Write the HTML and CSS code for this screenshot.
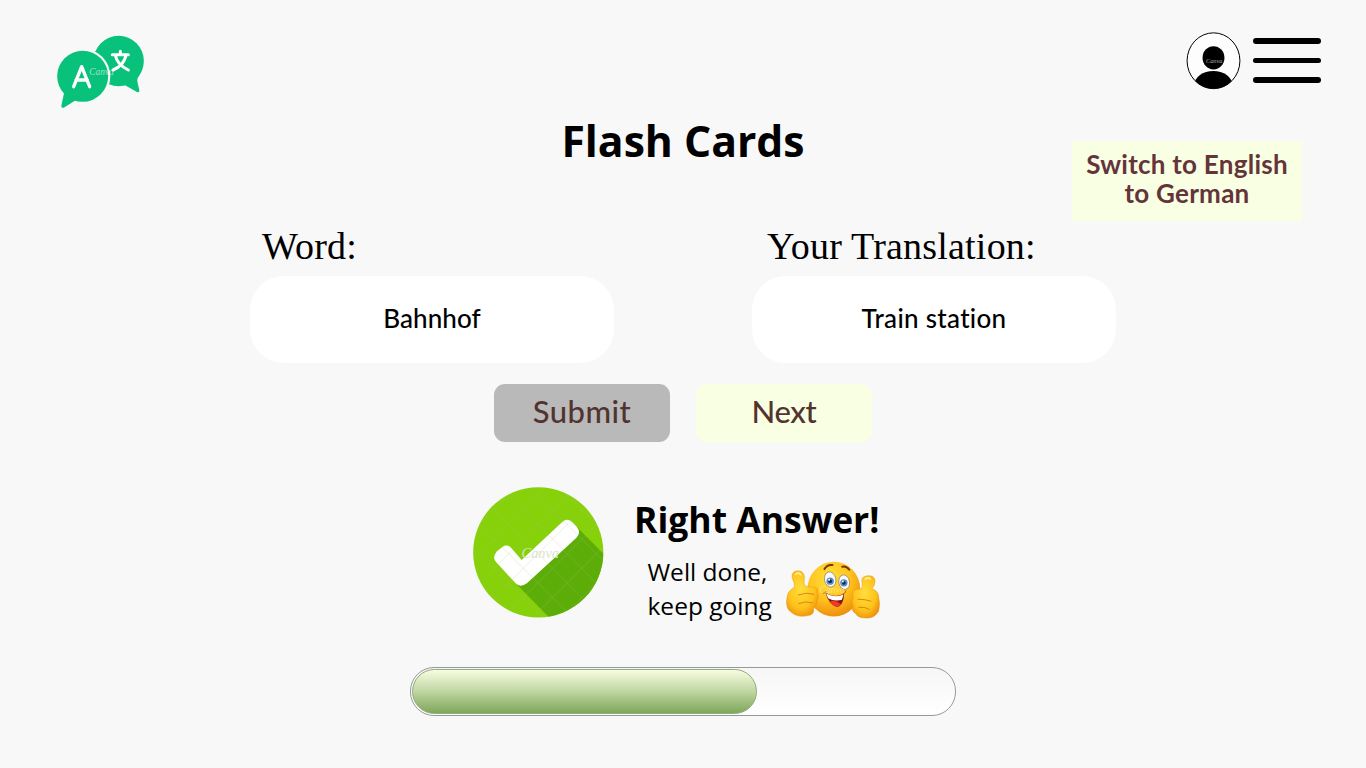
FILE: index.html
```html
<!DOCTYPE html>
<html lang="en">
<head>
<meta charset="utf-8">
<title>Flash Cards</title>
<link rel="stylesheet" href="styles.css">
</head>
<body>
<header class="header">
  <svg class="logo" viewBox="36 30 261 222" role="img" aria-label="Translate">
    <circle class="logo-green" cx="221" cy="108" r="75.500"/>
    <path class="logo-green" d="M284 149q-10 12-6 25l5 21q1 9-7 6l-36-20z"/>
    <circle class="logo-gap" cx="113" cy="154" r="83"/>
    <circle class="logo-green" cx="113" cy="154" r="76.500"/>
    <path class="logo-green" d="M57 205l-8 37q-1 8 7 6l36-22z"/>
    <path class="logo-stroke" d="M86 185l24-60 24 60M93 165h34"/>
    <path class="logo-stroke logo-thin" d="M202 89h48M226 79v10M211 91q5 28 39 44M243 91q-7 31-39 44"/>
    <text class="mark mark-logo" x="133" y="149">Canva</text>
  </svg>
  <div class="header-actions">
    <svg class="avatar" viewBox="34 35 165 173" role="img" aria-label="Profile">
      <defs><clipPath id="avatar-clip"><ellipse cx="116.500" cy="121.500" rx="80" ry="84.500"/></clipPath></defs>
      <ellipse cx="116.500" cy="121.500" rx="79.500" ry="84" fill="#fdfdfd" stroke="#000" stroke-width="3"/>
      <g clip-path="url(#avatar-clip)"><ellipse cx="116" cy="194" rx="57" ry="42"/></g>
      <ellipse cx="116.500" cy="112.500" rx="33" ry="35"/>
      <text class="mark mark-avatar" x="94" y="129">Canva</text>
    </svg>
    <div class="menu"><span></span><span></span><span></span></div>
  </div>
</header>
<main>
  <section class="title-row">
    <h1 class="title">Flash Cards</h1>
    <button class="switch">Switch to English<br>to German</button>
  </section>
  <section class="fields">
    <div class="field">
      <h2 class="label label-word">Word:</h2>
      <div class="box">Bahnhof</div>
    </div>
    <div class="field">
      <h2 class="label label-translation">Your Translation:</h2>
      <div class="box box-translation">Train station</div>
    </div>
  </section>
  <section class="buttons">
    <button class="btn btn-submit">Submit</button>
    <button class="btn btn-next">Next</button>
  </section>
  <section class="feedback">
    <svg class="check" viewBox="24 21 392 393" role="img" aria-label="Correct">
      <defs>
        <clipPath id="check-clip"><circle cx="220" cy="217" r="195.500"/></clipPath>
        <pattern id="check-grid" width="62" height="62" patternUnits="userSpaceOnUse" patternTransform="rotate(45)"><path d="M0 0H62M0 0V62" stroke="#a5bd85" stroke-opacity=".5" stroke-width="2" fill="none"/></pattern>
      </defs>
      <g clip-path="url(#check-clip)">
        <rect x="20" y="20" width="400" height="400" fill="#87d10b"/>
        <path d="M336 141L436 241V420H260L152 310z" fill="#5cad08"/>
      </g>
      <path d="M96 214Q80 234 94 247L152 310Q166 325 186 310L334 174Q350 158 336 141L324 128Q308 112 292 126L170 240L141 206Q128 190 112 201z" fill="#fff"/>
      <circle cx="220" cy="217" r="195" fill="url(#check-grid)"/>
      <text class="mark mark-check" x="170" y="233">Canva</text>
    </svg>
    <div class="message">
      <h2 class="result">Right Answer!</h2>
      <div class="praise">
        <p class="praise-text">Well done,<br>keep going</p>
        <svg class="emoji" viewBox="19 27 281 173" role="img" aria-label="Thumbs up">
          <defs>
            <radialGradient id="face" cx=".42" cy=".3" r=".72"><stop offset="0" stop-color="#ffe23c"/><stop offset=".55" stop-color="#ffc31f"/><stop offset="1" stop-color="#ee8d0c"/></radialGradient>
            <radialGradient id="hand" cx=".45" cy=".4" r=".65"><stop offset="0" stop-color="#ffde3c"/><stop offset=".65" stop-color="#ffc21b"/><stop offset="1" stop-color="#ed900c"/></radialGradient>
          </defs>
          <ellipse cx="162" cy="111" rx="79" ry="82" fill="url(#face)"/>
          <path d="M134 51q8-15 24-12M187 44q12-4 21 9" fill="none" stroke="#7b360b" stroke-width="6" stroke-linecap="round"/>
          <ellipse cx="151" cy="82" rx="17" ry="23" fill="#f5faff" stroke="#9d7547" stroke-width="2" transform="rotate(-12 151 82)"/>
          <ellipse cx="193" cy="90" rx="16" ry="22" fill="#f5faff" stroke="#9d7547" stroke-width="2" transform="rotate(-12 193 90)"/>
          <circle cx="151" cy="87" r="11" fill="#588bc7"/><circle cx="192" cy="92" r="11" fill="#588bc7"/>
          <circle cx="151" cy="87" r="5.500" fill="#132846"/><circle cx="192" cy="92" r="5.500" fill="#132846"/>
          <circle cx="148" cy="83" r="3" fill="#fff"/><circle cx="189" cy="88" r="3" fill="#fff"/>
          <path d="M137 122q28 17 56 3q-2 37-22 39q-24-6-34-42z" fill="#8c160d"/>
          <path d="M149 149q15-9 34 7q-6 8-13 8-13-5-21-15z" fill="#ef382c"/>
          <path d="M139 124q27 14 52 3l-5 16q-23 6-41-5z" fill="#fff"/>
          <path d="M130 123q5-1 9-5M190 125q8-5 8-9" fill="none" stroke="#b76811" stroke-width="3" stroke-linecap="round"/>
          <g fill="url(#hand)" stroke="#e8960f" stroke-width="1.500">
            <path d="M44 105Q46 95 40 84Q31 63 48 57Q71 52 74 74Q73 89 73 97Q79 105 102 105Q117 107 113 120Q120 133 112 146Q112 160 102 168Q104 187 85 190Q55 197 36 181Q16 169 22 137Q24 115 44 105z"/>
            <path d="M245 110Q249 99 246 88Q243 73 263 71Q285 69 285 88Q285 100 276 110Q296 116 296 137Q301 154 296 176Q287 194 267 197Q235 200 227 184Q213 176 219 160Q213 146 220 136Q214 113 232 111z"/>
          </g>
          <path d="M56 128q25-9 46-2M57 154q22-9 41-2M234 141q22 0 39 6M236 165q20-2 32 6" fill="none" stroke="#ca7c0c" stroke-width="2.500" stroke-linecap="round"/>
          <path d="M49 67q6-9 14 1M256 81q8-7 15 0" fill="none" stroke="#fff0a0" stroke-width="5" stroke-linecap="round"/>
          <text class="mark mark-emoji" x="119" y="121">Canva</text>
        </svg>
      </div>
    </div>
  </section>
  <div class="progress"><div class="progress-fill"></div></div>
</main>
</body>
</html>
```
FILE: styles.css
```css
* { box-sizing: border-box; }
body {
  margin: 0;
  width: 1366px;
  height: 768px;
  overflow: hidden;
  background: #f8f8f8;
  color: #000;
  font-family: "Open Sans", sans-serif;
  font-variant-ligatures: none;
}
h1, h2, p { margin: 0; }
button { border: 0; padding: 0; }
.header {
  height: 118px;
  padding: 32px 45px 0 57px;
  display: flex;
  justify-content: space-between;
  align-items: flex-start;
}
.logo { width: 87px; height: 74px; margin-top: 3px; }
.logo-green { fill: #08c17b; }
.logo-gap { fill: #f8f8f8; }
.logo-stroke { fill: none; stroke: #fff; stroke-width: 10; stroke-linecap: round; stroke-linejoin: round; }
.logo-thin { stroke-width: 9; }
.mark { font-family: "Liberation Serif", serif; font-style: italic; }
.mark-logo { font-size: 28px; fill: #fff; fill-opacity: .6; }
.mark-avatar { font-size: 19px; fill: #aaa; }
.mark-check { font-size: 43px; fill: #d9e4ce; }
.mark-emoji { font-size: 29px; fill: #fff; fill-opacity: .4; }
.header-actions { display: flex; gap: 12px; }
.avatar { width: 55px; height: 57.500px; }
.menu {
  width: 68px;
  height: 45px;
  margin-top: 6px;
  display: flex;
  flex-direction: column;
  justify-content: space-between;
}
.menu span { height: 5.600px; border-radius: 3px; background: #000; }
.title-row {
  height: 103px;
  display: grid;
  grid-template-columns: 1fr auto 1fr;
  align-items: start;
}
.title { grid-column: 2; font-size: 42.700px; line-height: 46px; font-weight: 700; white-space: nowrap; }
.switch {
  justify-self: end;
  width: 230px;
  height: 80px;
  margin: 23px 64px 0 0;
  padding-bottom: 4px;
  background: #f9ffe2;
  color: #65343b;
  font: 700 26px/29px Lato, sans-serif;
  font-variant-ligatures: none;
  letter-spacing: .25px;
  white-space: nowrap;
}
.fields { display: flex; gap: 138px; padding-left: 250px; }
.field { width: 364px; }
.label {
  height: 55px;
  padding-left: 12px;
  font: 400 38px/50px "Liberation Serif", serif;
  letter-spacing: .2px;
  white-space: nowrap;
}
.label-translation { padding-left: 15px; }
.box {
  height: 87px;
  border-radius: 34px;
  background: #fff;
  display: flex;
  align-items: center;
  justify-content: center;
  padding-bottom: 4px;
  font: 500 26px/30px Lato, sans-serif;
  font-variant-ligatures: none;
  letter-spacing: .1px;
}
.box-translation { letter-spacing: .3px; }
.buttons { display: flex; justify-content: center; gap: 26px; margin-top: 21px; }
.btn {
  width: 176px;
  height: 58px;
  border-radius: 11px;
  padding-bottom: 5px;
  color: #51342f;
  font: 500 31px/36px Lato, sans-serif;
}
.btn-submit { background: #b9b9b9; letter-spacing: .5px; }
.btn-next { background: #f9ffe2; letter-spacing: -.3px; }
.feedback { display: flex; gap: 30.500px; margin-top: 45px; padding-left: 473px; height: 180px; }
.check { width: 130.500px; height: 131px; }
.message { padding-top: 8px; }
.result { font-size: 35.500px; line-height: 48px; font-weight: 700; white-space: nowrap; }
.praise { display: flex; padding-left: 13.500px; }
.praise-text { width: 138px; padding-top: 12px; font-size: 24.500px; line-height: 34px; white-space: nowrap; }
.emoji { width: 94px; height: 58px; margin-top: 18px; }
.progress {
  width: 545.500px;
  height: 49px;
  margin-left: 410px;
  padding: 1px;
  border: 1px solid #999;
  border-radius: 24px;
  background: linear-gradient(#f6f6f6, #fff);
}
.progress-fill {
  width: 345px;
  height: 45px;
  border: 1px solid #91ad78;
  border-radius: 23px;
  background: linear-gradient(#f7fde1, #c5daa8 45%, #7fa75a);
}
```
